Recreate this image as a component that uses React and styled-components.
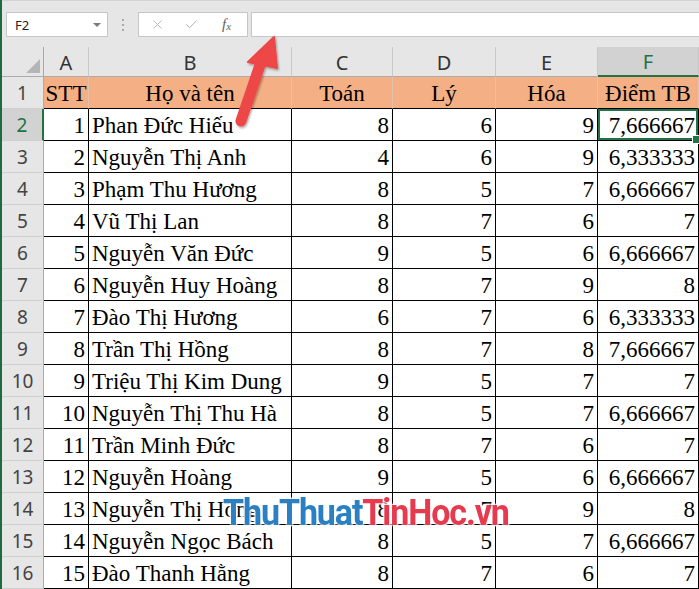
import React from "react";
import styled, { createGlobalStyle } from "styled-components";
import { X, Check } from "lucide-react";

const GlobalStyle = createGlobalStyle`
  html, body { margin: 0; padding: 0; background: #ffffff; overflow: hidden; }
  * { box-sizing: border-box; }
`;

const Window = styled.div`
  position: relative;
  width: 699px;
  height: 589px;
  overflow: hidden;
  border-left: 2px solid #1f6b41;
  background: #ffffff;
`;

const FormulaBar = styled.div`
  display: flex;
  align-items: flex-start;
  height: 47px;
  padding: 11px 0 0 4px;
  background: #e6e6e6;
  border-top: 1px solid #d4d4d4;
`;

const NameBox = styled.div`
  display: flex;
  align-items: center;
  justify-content: space-between;
  width: 102px;
  height: 25px;
  padding: 0 6px 0 8px;
  background: #fff;
  border: 1px solid #c6c6c6;
  font-family: "Noto Sans", "Liberation Sans", sans-serif;
  font-size: 13px;
  color: #222;
`;

const Caret = styled.span`
  width: 0;
  height: 0;
  border-left: 4px solid transparent;
  border-right: 4px solid transparent;
  border-top: 4px solid #7a7a7a;
`;

const Dots = styled.div`
  display: flex;
  flex-direction: column;
  justify-content: center;
  gap: 3px;
  width: 30px;
  height: 25px;
  align-items: center;
  span {
    width: 2px;
    height: 2px;
    background: #a8a8a8;
  }
`;

const FxBox = styled.div`
  display: flex;
  align-items: center;
  width: 110px;
  height: 25px;
  padding: 0 0 0 11px;
  gap: 19px;
  background: #fff;
  border: 1px solid #c6c6c6;
  color: #b0b0b0;
`;

const Fx = styled.span`
  font-family: "Liberation Serif", serif;
  font-style: italic;
  font-size: 15px;
  color: #5e5e5e;
  margin-left: 4px;
  sub { font-size: 11px; vertical-align: -1px; }
`;

const FormulaInput = styled.div`
  flex: 1;
  height: 25px;
  margin-left: 3px;
  background: #fff;
  border: 1px solid #c6c6c6;
  border-right: none;
`;

const Grid = styled.div`
  display: grid;
  grid-template-columns: 42px 45px 203px 101px 103px 102px 1fr;
  grid-template-rows: 30px repeat(16, 32px);
`;

const Corner = styled.div`
  position: relative;
  background: #e6e6e6;
  border-right: 1px solid #ababab;
  border-bottom: 1px solid #ababab;
  &::after {
    content: "";
    position: absolute;
    right: 3px;
    bottom: 3px;
    width: 0;
    height: 0;
    border-left: 14px solid transparent;
    border-bottom: 14px solid #b5b5b5;
  }
`;

const ColHead = styled.div`
  display: flex;
  align-items: center;
  justify-content: center;
  padding-top: 1px;
  font-family: "Noto Sans", "Liberation Sans", sans-serif;
  font-size: 20px;
  color: ${(p) => (p.$sel ? "#217346" : "#333")};
  background: ${(p) => (p.$sel ? "#d2d2d2" : "#e6e6e6")};
  border-right: 1px solid #c8c8c8;
  border-bottom: ${(p) => (p.$sel ? "2px solid #217346" : "1px solid #ababab")};
`;

const RowHead = styled.div`
  display: flex;
  align-items: center;
  justify-content: center;
  padding-top: 1px;
  font-family: "Noto Sans", "Liberation Sans", sans-serif;
  font-size: 19px;
  color: ${(p) => (p.$sel ? "#217346" : "#444")};
  background: ${(p) => (p.$sel ? "#d2d2d2" : "#e6e6e6")};
  border-right: ${(p) => (p.$sel ? "2px solid #217346" : "1px solid #ababab")};
  border-bottom: 1px solid #cfcfcf;
`;

const Cell = styled.div`
  position: relative;
  display: flex;
  align-items: flex-end;
  justify-content: ${(p) => (p.$align === "right" ? "flex-end" : p.$align === "center" ? "center" : "flex-start")};
  padding: 0 3px 1px 3px;
  font-family: "Liberation Serif", "Times New Roman", serif;
  font-size: 23px;
  line-height: 26px;
  color: #000;
  white-space: nowrap;
  overflow: hidden;
  background: ${(p) => (p.$head ? "#f4b084" : "#fff")};
  border-right: 1px solid ${(p) => (p.$head ? "#e2c2aa" : "#000")};
  border-bottom: 1px solid #000;
  ${(p) =>
    p.$active &&
    `
    overflow: visible;
    box-shadow: inset 0 0 0 2px #217346;
    &::after {
      content: "";
      position: absolute;
      right: -3px;
      bottom: -4px;
      width: 7px;
      height: 7px;
      background: #217346;
      border: 1px solid #fff;
      z-index: 2;
    }
  `}
`;

const Overlay = styled.svg`
  position: absolute;
  left: -2px;
  top: 0;
  pointer-events: none;
  overflow: visible;
`;

const Watermark = styled.div`
  position: absolute;
  left: 221px;
  top: 491px;
  font-family: Roboto, "Liberation Sans", sans-serif;
  font-weight: 700;
  font-size: 37px;
  letter-spacing: -1.2px;
  line-height: 44px;
  white-space: nowrap;
  transform: scaleX(0.92);
  transform-origin: left center;
  pointer-events: none;
  text-shadow: 0 0 2px #fff, 0 0 3px #fff, 1px 1px 2px #fff, -1px -1px 2px #fff;
`;

const Blue = styled.span` color: #2b7fc3; `;
const Red = styled.span` color: #e83a4e; `;

const rows = [
  [1, "Phan Đức Hiếu", 8, 6, 9, "7,666667"],
  [2, "Nguyễn Thị Anh", 4, 6, 9, "6,333333"],
  [3, "Phạm Thu Hương", 8, 5, 7, "6,666667"],
  [4, "Vũ Thị Lan", 8, 7, 6, "7"],
  [5, "Nguyễn Văn Đức", 9, 5, 6, "6,666667"],
  [6, "Nguyễn Huy Hoàng", 8, 7, 9, "8"],
  [7, "Đào Thị Hương", 6, 7, 6, "6,333333"],
  [8, "Trần Thị Hồng", 8, 7, 8, "7,666667"],
  [9, "Triệu Thị Kim Dung", 9, 5, 7, "7"],
  [10, "Nguyễn Thị Thu Hà", 8, 5, 7, "6,666667"],
  [11, "Trần Minh Đức", 8, 7, 6, "7"],
  [12, "Nguyễn Hoàng", 9, 5, 6, "6,666667"],
  [13, "Nguyễn Thị Hồng", 8, 7, 9, "8"],
  [14, "Nguyễn Ngọc Bách", 8, 5, 7, "6,666667"],
  [15, "Đào Thanh Hằng", 8, 7, 6, "7"],
];

const cols = ["A", "B", "C", "D", "E", "F"];
const heads = ["STT", "Họ và tên", "Toán", "Lý", "Hóa", "Điểm TB"];

export default function App() {
  return (
    <>
      <GlobalStyle />
      <Window>
        <FormulaBar>
          <NameBox>
            <span>F2</span>
            <Caret />
          </NameBox>
          <Dots>
            <span />
            <span />
            <span />
          </Dots>
          <FxBox>
            <X size={15} strokeWidth={1.4} />
            <Check size={15} strokeWidth={1.6} />
            <Fx>
              f<sub>x</sub>
            </Fx>
          </FxBox>
          <FormulaInput />
        </FormulaBar>
        <Grid>
          <Corner />
          {cols.map((c) => (
            <ColHead key={c} $sel={c === "F"}>
              {c}
            </ColHead>
          ))}
          <RowHead>1</RowHead>
          {heads.map((h) => (
            <Cell key={h} $head $align="center">
              {h}
            </Cell>
          ))}
          {rows.map((r, i) => (
            <React.Fragment key={r[0]}>
              <RowHead $sel={i === 0}>{i + 2}</RowHead>
              {r.map((v, j) => (
                <Cell key={j} $align={j === 1 ? "left" : "right"} $active={i === 0 && j === 5}>
                  {v}
                </Cell>
              ))}
            </React.Fragment>
          ))}
        </Grid>
        <Overlay width="699" height="589" viewBox="0 0 699 589">
          <defs>
            <filter id="sh" x="-50%" y="-50%" width="200%" height="200%">
              <feDropShadow dx="1" dy="1.5" stdDeviation="1.2" floodColor="#000" floodOpacity="0.35" />
            </filter>
          </defs>
          <g filter="url(#sh)" fill="#ee4646" stroke="#ee4646">
            <line x1="241" y1="121" x2="261" y2="62" strokeWidth="11" strokeLinecap="round" />
            <polygon points="274,37 248,62 277,68" strokeWidth="2" strokeLinejoin="round" />
          </g>
        </Overlay>
        <Watermark>
          <Blue>ThuThuat</Blue>
          <Red>TinHoc.vn</Red>
        </Watermark>
      </Window>
    </>
  );
}
